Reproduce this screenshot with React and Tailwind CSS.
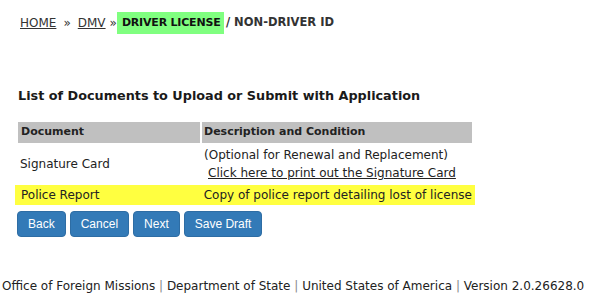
export default function App() {
  const f = { fontFamily: '"DejaVu Sans", Verdana, sans-serif' };
  return (
    <div className="w-[615px] h-[301px] bg-white text-[#222] relative" style={f}>
      <div className="pt-[12px] pl-[20px] flex items-center h-[34px] text-[12px] text-[#333] whitespace-nowrap">
        <span className="underline">HOME</span>
        <span className="mx-[7px]">»</span>
        <span className="underline">DMV</span>
        <span className="ml-[4px]">»</span>
        <span className="ml-[0px] shrink-0 bg-[#80ff80] h-[22px] w-[107px] flex items-center pl-[5px] font-bold text-[11px] tracking-[-0.2px] text-[#111]">DRIVER LICENSE</span>
        <span className="font-bold ml-[2px] text-[11.5px]">/ NON-DRIVER ID</span>
      </div>
      <div className="mt-[52px] pl-[18px] font-bold text-[12.8px] text-[#1a1a1a]">List of Documents to Upload or Submit with Application</div>
      <div className="mt-[17px] ml-[15px] w-[460px] text-[12px] whitespace-nowrap">
        <div className="flex gap-[2px] px-[3px]">
          <div className="w-[182px] h-[21px] bg-[#c0c0c0] font-bold text-[11px] flex items-center pl-[3px]">Document</div>
          <div className="flex-1 h-[21px] bg-[#c0c0c0] font-bold text-[11px] flex items-center pl-[2px]">Description and Condition</div>
        </div>
        <div className="flex gap-[2px] px-[3px] h-[42px]">
          <div className="w-[182px] flex items-center pl-[2px]">Signature Card</div>
          <div className="flex-1 flex flex-col justify-center pl-[2px] leading-[18px]">
            <div>(Optional for Renewal and Replacement)</div>
            <div className="underline pl-[4px]">Click here to print out the Signature Card</div>
          </div>
        </div>
        <div className="flex gap-[2px] px-[3px] h-[20px] bg-[#ffff40]">
          <div className="w-[182px] flex items-center pl-[3px]">Police Report</div>
          <div className="flex-1 flex items-center pl-[2px]">Copy of police report detailing lost of license</div>
        </div>
      </div>
      <div className="mt-[6px] ml-[17px] flex gap-[4px] text-[12px] text-white" style={{ fontFamily: '"Liberation Sans", Arial, sans-serif' }}>
        <div className="h-[26px] px-[10px] rounded-[4px] bg-[#337ab7] border border-[#2e6da4] flex items-center">Back</div>
        <div className="h-[26px] px-[10px] rounded-[4px] bg-[#337ab7] border border-[#2e6da4] flex items-center">Cancel</div>
        <div className="h-[26px] px-[10px] rounded-[4px] bg-[#337ab7] border border-[#2e6da4] flex items-center">Next</div>
        <div className="h-[26px] px-[10px] rounded-[4px] bg-[#337ab7] border border-[#2e6da4] flex items-center">Save Draft</div>
      </div>
      <div className="absolute left-[2px] top-[277px] text-[12px] text-[#222]">
        Office of Foreign Missions <span className="text-[#888]">|</span> Department of State <span className="text-[#888]">|</span> United States of America <span className="text-[#888]">|</span> Version 2.0.26628.0
      </div>
    </div>
  );
}
